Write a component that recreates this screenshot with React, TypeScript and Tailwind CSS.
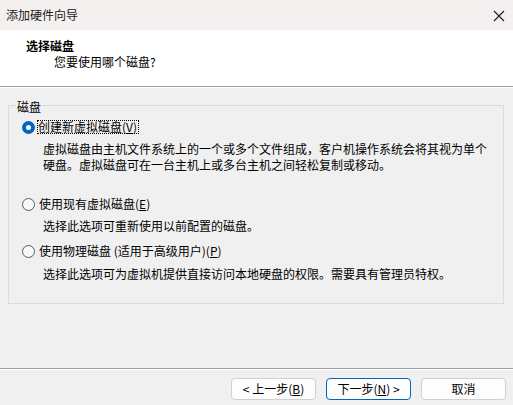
import React from "react";

const font = { fontFamily: '"Noto Sans CJK SC", "Noto Sans", sans-serif' };

function Radio({ checked }: { checked?: boolean }) {
  if (checked) {
    return (
      <span className="w-[13px] h-[13px] rounded-full bg-[#0067c0] flex items-center justify-center shrink-0">
        <span className="w-[5px] h-[5px] rounded-full bg-white" />
      </span>
    );
  }
  return <span className="w-[13px] h-[13px] rounded-full border border-[#5c5c5c] bg-[#f7f7f7] shrink-0" />;
}

function Key({ k }: { k: string }) {
  return (
    <>
      (<span className="underline underline-offset-[1px]">{k}</span>)
    </>
  );
}

export default function App() {
  return (
    <div style={font} className="w-[513px] h-[405px] bg-[#f0f0f0] flex flex-col text-[12px] text-black overflow-hidden">
      {/* Title bar */}
      <div className="h-[30px] bg-[#f3f0ef] flex items-center justify-between pl-[6px] pr-[8px] shrink-0">
        <span className="leading-[16px] text-[#1a1a1a]">添加硬件向导</span>
        <svg width="12" height="12" viewBox="0 0 12 12" className="mt-[1px]">
          <path d="M1 1 L11 11 M11 1 L1 11" stroke="#1a1a1a" strokeWidth="1.1" fill="none" />
        </svg>
      </div>

      {/* Header */}
      <div className="h-[56px] bg-white pt-[8px] shrink-0">
        <div className="pl-[26px] leading-[16px] font-bold">选择磁盘</div>
        <div className="pl-[54px] leading-[16px]">您要使用哪个磁盘?</div>
      </div>
      <div className="h-[1px] bg-[#a0a0a0] shrink-0" />
      <div className="h-[1px] bg-white shrink-0" />

      {/* Body */}
      <div className="h-[280px] shrink-0 pt-[17px] pl-[8px] pr-[9px]">
        <div className="relative border border-[#dcdcdc] pt-[13px] pb-[21px] pl-[13px] leading-[16px]">
          <span className="absolute left-[7px] top-[-7px] px-[1px] bg-[#f0f0f0] leading-[16px]">磁盘</span>

          <div className="flex items-center h-[16px]">
            <Radio checked />
            <span className="ml-[2px] border border-dotted border-black leading-[12px] pr-[1px]">
              创建新虚拟磁盘<Key k="V" />
            </span>
          </div>
          <div className="pl-[21px] mt-[6px]">
            <div>虚拟磁盘由主机文件系统上的一个或多个文件组成，客户机操作系统会将其视为单个</div>
            <div>硬盘。虚拟磁盘可在一台主机上或多台主机之间轻松复制或移动。</div>
          </div>

          <div className="flex items-center h-[16px] mt-[23px]">
            <Radio />
            <span className="ml-[4px]">
              使用现有虚拟磁盘<Key k="E" />
            </span>
          </div>
          <div className="pl-[21px] mt-[6px]">选择此选项可重新使用以前配置的磁盘。</div>

          <div className="flex items-center h-[16px] mt-[9px]">
            <Radio />
            <span className="ml-[4px]">
              使用物理磁盘 (适用于高级用户)<Key k="P" />
            </span>
          </div>
          <div className="pl-[21px] mt-[7px]">选择此选项可为虚拟机提供直接访问本地硬盘的权限。需要具有管理员特权。</div>
        </div>
      </div>

      {/* Footer */}
      <div className="h-[1px] bg-[#a0a0a0] shrink-0" />
      <div className="h-[1px] bg-white shrink-0" />
      <div className="flex justify-end gap-[10px] pt-[8px] pr-[7px] shrink-0">
        <button className="w-[85px] h-[22px] rounded-[4px] border border-[#d0d0d0] bg-[#fdfdfd] leading-[16px] flex items-center justify-center">
          &lt; 上一步<Key k="B" />
        </button>
        <button className="w-[85px] h-[22px] rounded-[4px] border border-[#0067c0] bg-[#fdfdfd] leading-[16px] flex items-center justify-center">
          下一步<Key k="N" /> &gt;
        </button>
        <button className="w-[85px] h-[22px] rounded-[4px] border border-[#d0d0d0] bg-[#fdfdfd] leading-[16px] flex items-center justify-center">
          取消
        </button>
      </div>
    </div>
  );
}
